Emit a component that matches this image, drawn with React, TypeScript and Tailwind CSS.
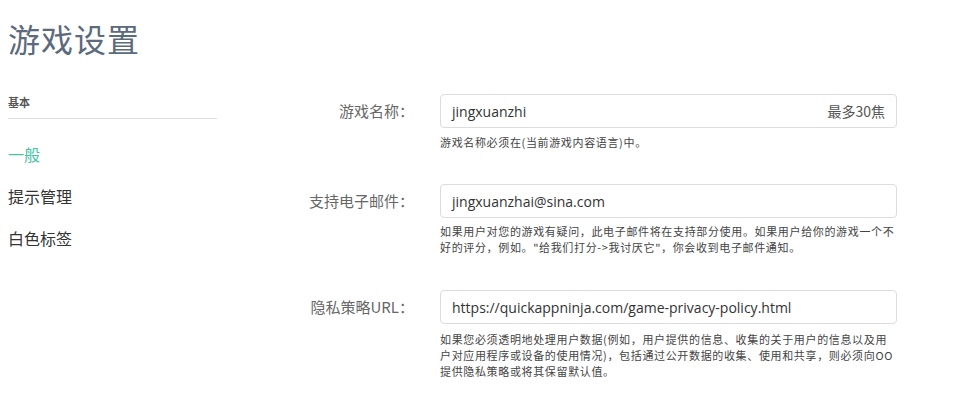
import React from "react";

const cjk = '"Noto Sans CJK SC", sans-serif';
const inputFont = '"Open Sans", "Noto Sans CJK SC", sans-serif';

function Row({
  label,
  value,
  suffix,
  help,
  helpMt,
}: {
  label: string;
  value: string;
  suffix?: string;
  help: string[];
  helpMt: string;
}) {
  return (
    <div className="flex">
      <div className="w-[197px] shrink-0 h-[34px] flex items-center justify-end text-[15px] text-[#666]" style={{ fontFamily: cjk }}>
        {label}
      </div>
      <div className="ml-[26px] w-[457px]">
        <div className="h-[34px] rounded-[4px] border border-[#dcdcdc] bg-white flex items-center justify-between px-[11px] text-[14px] text-[#333]" style={{ fontFamily: inputFont }}>
          <span>{value}</span>
          {suffix && <span className="text-[#555]" style={{ fontFamily: cjk }}>{suffix}</span>}
        </div>
        <div className={`${helpMt} text-[11px] tracking-[0.65px] leading-[16px] text-[#444] whitespace-nowrap`} style={{ fontFamily: cjk }}>
          {help.map((h, i) => (
            <div key={i}>{h}</div>
          ))}
        </div>
      </div>
    </div>
  );
}

export default function App() {
  return (
    <div className="w-[955px] h-[400px] bg-white overflow-hidden">
      <h1 className="ml-[8px] mt-[18px] text-[32px] leading-[40px] text-[#5b6a7c] tracking-[1px]" style={{ fontFamily: '"Noto Sans CJK SC", serif' }}>
        游戏设置
      </h1>
      <div className="flex mt-[36px]">
        <div className="ml-[8px] w-[209px] shrink-0" style={{ fontFamily: cjk }}>
          <div className="text-[11px] leading-[16px] font-bold text-[#555] pb-[8px] border-b border-[#dedede]">基本</div>
          <div className="mt-[23px] flex flex-col gap-[18px] text-[16px] leading-[24px]">
            <div className="text-[#45c4a2]">一般</div>
            <div className="text-[#333]">提示管理</div>
            <div className="text-[#333]">白色标签</div>
          </div>
        </div>
        <div className="flex flex-col">
          <Row
            label="游戏名称："
            value="jingxuanzhi"
            suffix="最多30焦"
            helpMt="mt-[6px]"
            help={["游戏名称必须在(当前游戏内容语言)中。"]}
          />
          <div className="h-[34px]" />
          <Row
            label="支持电子邮件："
            value="jingxuanzhai@sina.com"
            helpMt="mt-[5px]"
            help={[
              "如果用户对您的游戏有疑问，此电子邮件将在支持部分使用。如果用户给你的游戏一个不",
              "好的评分，例如。\"给我们打分->我讨厌它\"，你会收到电子邮件通知。",
            ]}
          />
          <div className="h-[35px]" />
          <Row
            label="隐私策略URL："
            value="https://quickappninja.com/game-privacy-policy.html"
            helpMt="mt-[7px]"
            help={[
              "如果您必须透明地处理用户数据(例如，用户提供的信息、收集的关于用户的信息以及用",
              "户对应用程序或设备的使用情况)，包括通过公开数据的收集、使用和共享，则必须向OO",
              "提供隐私策略或将其保留默认值。",
            ]}
          />
        </div>
      </div>
    </div>
  );
}
